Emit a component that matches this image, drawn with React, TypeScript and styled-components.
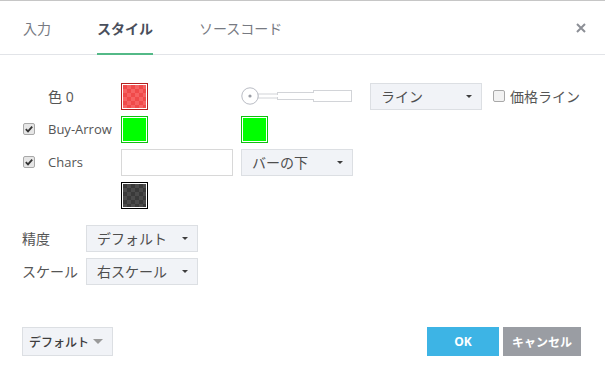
import React from "react";
import styled, { createGlobalStyle, css } from "styled-components";

const Global = createGlobalStyle`
  html, body { margin: 0; padding: 0; background: #fff; }
  body { font-family: "Open Sans", "Noto Sans CJK JP", sans-serif; }
`;

const Dialog = styled.div`
  width: 605px;
  height: 380px;
  box-sizing: border-box;
  border-top: 1px solid #c6c6c6;
  display: flex;
  flex-direction: column;
  color: #4a4a4a;
`;

const Header = styled.div`
  height: 53px;
  border-bottom: 1px solid #e2e4e8;
  display: flex;
  align-items: stretch;
  padding-left: 23px;
  padding-right: 19px;
  gap: 46px;
`;

const Tab = styled.div<{ $active?: boolean }>`
  display: flex;
  align-items: center;
  box-sizing: border-box;
  padding-top: 2px;
  border-bottom: 2px solid ${(p) => (p.$active ? "#53b987" : "transparent")};
  margin-bottom: -1px;
  font-size: 14px;
  font-weight: ${(p) => (p.$active ? 700 : 400)};
  color: ${(p) => (p.$active ? "#4a4f5c" : "#777a82")};
`;

const Close = styled.div`
  margin-left: auto;
  display: flex;
  align-items: center;
`;

const Body = styled.div`
  padding: 28px 0 0 23px;
  display: flex;
  flex-direction: column;
`;

const Grid = styled.div`
  display: grid;
  grid-template-columns: 25px 73px 120px 129px 123px auto;
  grid-auto-rows: 26px;
  row-gap: 7px;
  align-items: center;
`;

const Label = styled.div<{ $jp?: boolean }>`
  font-size: ${(p) => (p.$jp ? 14 : 13)}px;
  color: #555;
  white-space: nowrap;
`;

const Swatch = styled.div<{ $border: string; $fill: string; $checker?: string }>`
  width: 27px;
  height: 27px;
  box-sizing: border-box;
  border: 1px solid ${(p) => p.$border};
  padding: 1px;
  background: #fff;
  > div {
    width: 100%;
    height: 100%;
    ${(p) =>
      p.$checker
        ? css`
            background-color: ${p.$fill};
            background-image: conic-gradient(
              ${p.$checker} 25%,
              transparent 0 50%,
              ${p.$checker} 0 75%,
              transparent 0
            );
            background-size: 8px 8px;
          `
        : css`
            background: ${p.$fill};
          `}
  }
`;

const Select = styled.div<{ $w?: number }>`
  width: ${(p) => p.$w ?? 112}px;
  height: 27px;
  box-sizing: border-box;
  border: 1px solid #dcdfe3;
  background: #f1f3f7;
  display: flex;
  align-items: center;
  justify-content: space-between;
  padding: 0 9px 0 10px;
  font-size: 14px;
  color: #4e4e4e;
  white-space: nowrap;
`;

const Arrow = styled.span<{ $color?: string; $size?: number }>`
  flex: none;
  width: 0;
  height: 0;
  border-left: ${(p) => p.$size ?? 3}px solid transparent;
  border-right: ${(p) => p.$size ?? 3}px solid transparent;
  border-top: ${(p) => p.$size ?? 3}px solid ${(p) => p.$color ?? "#3d3d3d"};
`;

const TextInput = styled.div`
  width: 112px;
  height: 27px;
  box-sizing: border-box;
  border: 1px solid #d8d8d8;
  background: #fff;
`;

const CheckLabel = styled.div`
  display: flex;
  align-items: center;
  gap: 5px;
  font-size: 14px;
  color: #555;
  white-space: nowrap;
`;

const Settings = styled.div`
  margin-top: 17px;
  display: grid;
  grid-template-columns: 64px auto;
  grid-auto-rows: 26px;
  row-gap: 7px;
  align-items: center;
  justify-content: start;
  margin-left: -1px;
`;

const Footer = styled.div`
  margin-top: auto;
  margin-bottom: 24px;
  padding: 0 24px 0 22px;
  display: flex;
  align-items: center;
`;

const DefaultButton = styled.div`
  width: 91px;
  height: 29px;
  box-sizing: border-box;
  border: 1px solid #dcdfe3;
  background: #f1f3f7;
  display: flex;
  align-items: center;
  justify-content: space-between;
  padding: 0 9px 0 6px;
  font-size: 12px;
  font-weight: 500;
  color: #3d3d3d;
  white-space: nowrap;
`;

const Buttons = styled.div`
  margin-left: auto;
  display: flex;
  gap: 4px;
`;

const Button = styled.div<{ $bg: string; $w: number }>`
  width: ${(p) => p.$w}px;
  height: 29px;
  background: ${(p) => p.$bg};
  color: #fff;
  font-size: 12px;
  font-weight: 700;
  display: flex;
  align-items: center;
  justify-content: center;
`;

const Checkbox = ({ checked }: { checked?: boolean }) => (
  <svg width="12" height="12" viewBox="0 0 12 12">
    <rect x="0.5" y="0.5" width="11" height="11" rx="1.5" fill={checked ? "#e6e6e6" : "#f2f2f2"} stroke="#a8a8a8" />
    {checked && <path d="M2.8 6.2 L5 8.4 L9.2 3.6" fill="none" stroke="#333" strokeWidth="1.8" />}
  </svg>
);

const Slider = () => (
  <svg width="112" height="20" viewBox="0 0 112 20" style={{ display: "block" }}>
    <rect x="17" y="8" width="20" height="4" fill="#fff" stroke="#d2d4d8" />
    <rect x="36.5" y="6.5" width="36" height="7" fill="#fff" stroke="#d2d4d8" />
    <rect x="72.5" y="4.5" width="38" height="11" fill="#fff" stroke="#d2d4d8" />
    <rect x="72" y="7" width="1.5" height="6" fill="#fff" />
    <rect x="36" y="9" width="1.5" height="2" fill="#fff" />
    <circle cx="9" cy="10" r="8.2" fill="#fff" stroke="#b9bcc4" />
    <circle cx="9" cy="10" r="1.6" fill="#9a9da5" />
  </svg>
);

export default function App() {
  return (
    <>
      <Global />
      <Dialog>
        <Header>
          <Tab>入力</Tab>
          <Tab $active>スタイル</Tab>
          <Tab>ソースコード</Tab>
          <Close>
            <svg width="10" height="10" viewBox="0 0 10 10">
              <path d="M1 1 L9 9 M9 1 L1 9" stroke="#8c8f96" strokeWidth="2" />
            </svg>
          </Close>
        </Header>
        <Body>
          <Grid>
            <span />
            <Label $jp>色 0</Label>
            <Swatch $border="#b51f1f" $fill="#f04a4a" $checker="#f66262">
              <div />
            </Swatch>
            <Slider />
            <Select>
              <span>ライン</span>
              <Arrow />
            </Select>
            <CheckLabel>
              <Checkbox />
              <span>価格ライン</span>
            </CheckLabel>

            <Checkbox checked />
            <Label>Buy-Arrow</Label>
            <Swatch $border="#10c010" $fill="#00ff00">
              <div />
            </Swatch>
            <Swatch $border="#10c010" $fill="#00ff00">
              <div />
            </Swatch>
            <span />
            <span />

            <Checkbox checked />
            <Label>Chars</Label>
            <TextInput />
            <Select>
              <span>バーの下</span>
              <Arrow />
            </Select>
            <span />
            <span />

            <span />
            <span />
            <Swatch $border="#000" $fill="#3a3a3a" $checker="#4b4b4b">
              <div />
            </Swatch>
          </Grid>
          <Settings>
            <Label $jp>精度</Label>
            <Select>
              <span>デフォルト</span>
              <Arrow />
            </Select>
            <Label $jp>スケール</Label>
            <Select>
              <span>右スケール</span>
              <Arrow />
            </Select>
          </Settings>
        </Body>
        <Footer>
          <DefaultButton>
            <span>デフォルト</span>
            <Arrow $color="#9a9a9a" $size={5} />
          </DefaultButton>
          <Buttons>
            <Button $bg="#3db4e5" $w={72}>OK</Button>
            <Button $bg="#9a9da3" $w={78}>キャンセル</Button>
          </Buttons>
        </Footer>
      </Dialog>
    </>
  );
}
